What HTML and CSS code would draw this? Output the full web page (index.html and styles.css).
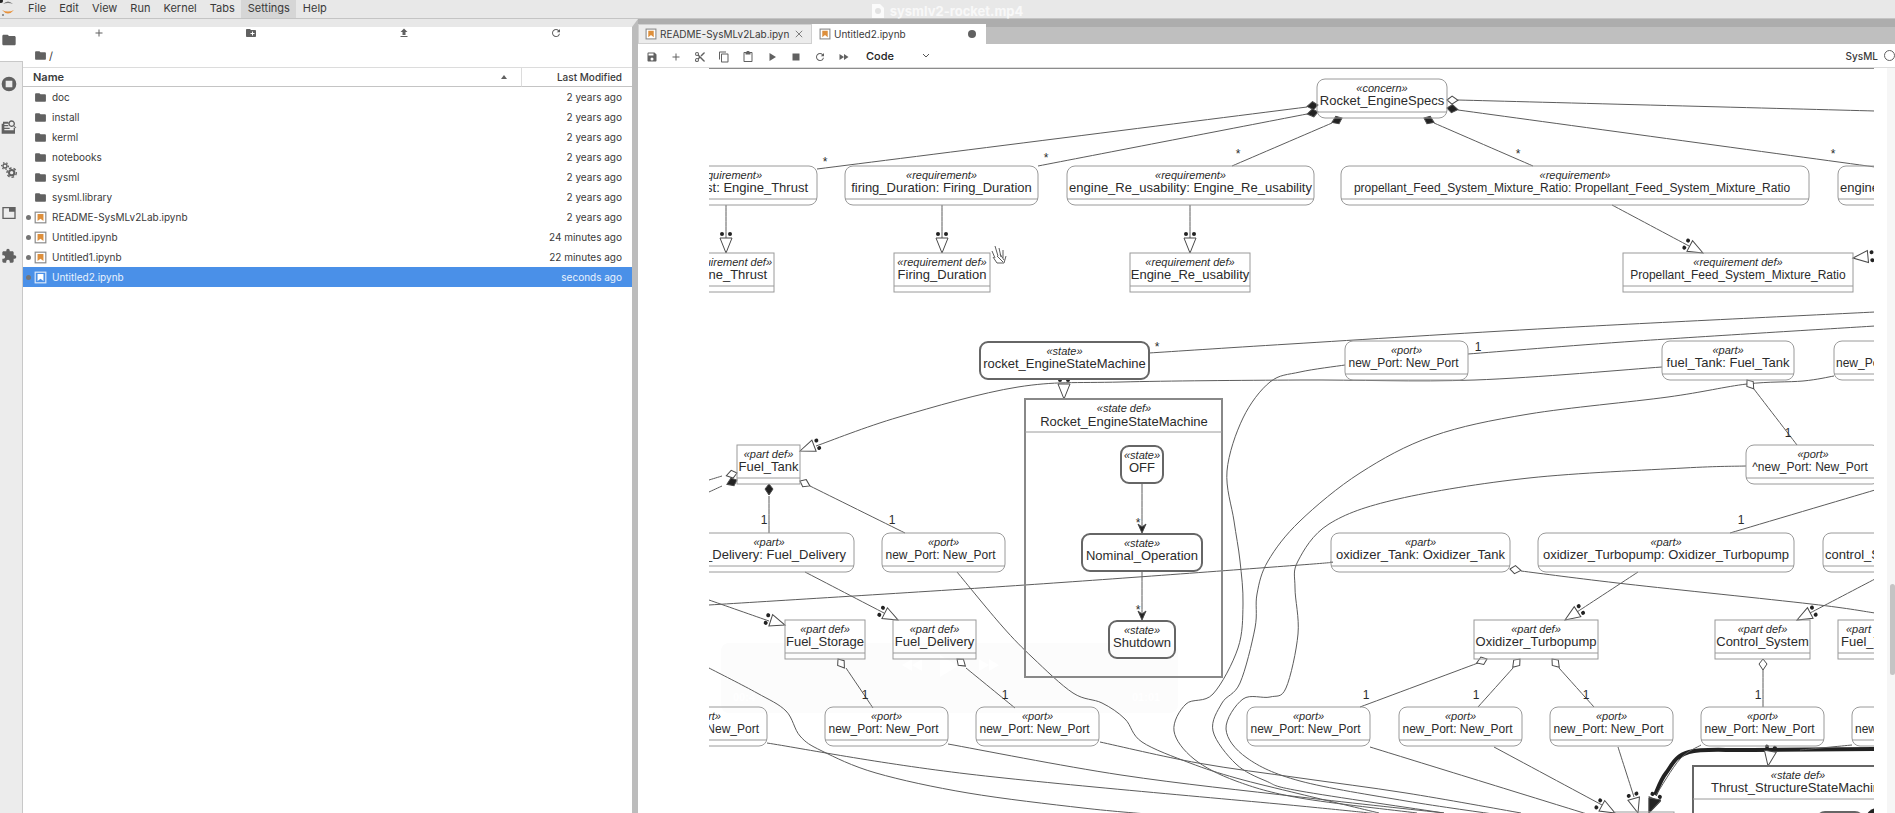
FILE: index.html
```html
<!DOCTYPE html>
<html lang="en">
<head>
    <meta charset="UTF-8">
    <meta name="viewport" content="width=device-width, initial-scale=1.0">
    <title>JupyterLab</title>
    <link rel="stylesheet" href="styles.css">
</head>
<body>
    <!-- shared icons -->
    <svg class="sprite" aria-hidden="true">
        <symbol id="i-folder" viewBox="0 0 24 24"><path d="M10 4H4c-1.100 0-2 .9-2 2v12c0 1.100.9 2 2 2h16c1.100 0 2-.9 2-2V8c0-1.100-.9-2-2-2h-8z"/></symbol>
        <symbol id="i-newfolder" viewBox="0 0 24 24"><path d="M20 6h-8l-2-2H4c-1.100 0-2 .9-2 2v12c0 1.100.9 2 2 2h16c1.100 0 2-.9 2-2V8c0-1.100-.9-2-2-2zm-1 8h-3v3h-2v-3h-3v-2h3V9h2v3h3z"/></symbol>
        <symbol id="i-add" viewBox="0 0 24 24"><path d="M19 13h-6v6h-2v-6H5v-2h6V5h2v6h6z"/></symbol>
        <symbol id="i-upload" viewBox="0 0 24 24"><path d="M9 16h6v-6h4l-7-7-7 7h4zm-4 2h14v2H5z"/></symbol>
        <symbol id="i-refresh" viewBox="0 0 18 18"><path d="M9 13.500c-2.490 0-4.500-2.010-4.500-4.500S6.510 4.500 9 4.500c1.240 0 2.360.52 3.170 1.330L10 8h5V3l-1.760 1.760C12.150 3.680 10.660 3 9 3 5.690 3 3.010 5.690 3.010 9S5.690 15 9 15c2.970 0 5.430-2.160 5.900-5h-1.520c-.46 2-2.240 3.500-4.380 3.500z"/></symbol>
        <symbol id="i-notebook" viewBox="0 0 22 22"><rect x="2" y="2" width="18" height="18" fill="#fff" stroke="#8a8a8a" stroke-width="2"/><path fill="#dd8f3c" d="M6 5h10v12l-5-4-5 4z"/></symbol>
        <symbol id="i-running" viewBox="0 0 24 24"><path d="M12 1a11 11 0 1 0 0 22a11 11 0 0 0 0-22zM7 7h10v10H7z" fill-rule="evenodd"/></symbol>
        <symbol id="i-search" viewBox="0 0 24 24"><path d="M3 4h8v3H5v2h6v2H5v2h8v2H5v2h14v-4h2v9H1V7h2zM16 2a5 5 0 0 1 4 8l3 3-1 1-3-3a5 5 0 1 1-3-9zm0 2a3 3 0 1 0 0 6a3 3 0 0 0 0-6z" fill-rule="evenodd"/></symbol>
        <symbol id="i-gears" viewBox="0 0 24 24"><g fill="none" stroke="#616161"><circle cx="6" cy="6" r="3" stroke-width="2"/><circle cx="6" cy="6" r="5" stroke-width="2" stroke-dasharray="2 3"/><circle cx="16" cy="16" r="4" stroke-width="3"/><circle cx="16" cy="16" r="7" stroke-width="2" stroke-dasharray="4 3"/></g></symbol>
        <symbol id="i-tabs" viewBox="0 0 24 24"><path d="M2 3h20v18H2zM4 5v14h16V10h-8V5z" fill-rule="evenodd"/></symbol>
        <symbol id="i-puzzle" viewBox="0 0 24 24"><path d="M20.500 11H19V7c0-1.100-.9-2-2-2h-4V3.500a2.500 2.500 0 0 0-5 0V5H4c-1.100 0-2 .9-2 2v3.800h1.500a2.700 2.700 0 0 1 0 5.400H2V20c0 1.100.9 2 2 2h3.800v-1.500a2.700 2.700 0 0 1 5.400 0V22H17c1.100 0 2-.9 2-2v-4h1.500a2.500 2.500 0 0 0 0-5z"/></symbol>
        <symbol id="i-save" viewBox="0 0 24 24"><path d="M17 3H5c-1.100 0-2 .9-2 2v14c0 1.100.9 2 2 2h14c1.100 0 2-.9 2-2V7zm-5 16a3 3 0 1 1 0-6 3 3 0 0 1 0 6zm3-10H5V5h10z"/></symbol>
        <symbol id="i-cut" viewBox="0 0 24 24"><path d="M9.640 7.640c.23-.5.360-1.050.360-1.640a4 4 0 1 0-4 4c.59 0 1.140-.13 1.640-.36L10 12l-2.360 2.360A4 4 0 1 0 10 18c0-.59-.13-1.140-.36-1.640L12 14l7 7h3v-1zM6 8a2 2 0 1 1 0-4 2 2 0 0 1 0 4zm0 12a2 2 0 1 1 0-4 2 2 0 0 1 0 4zM19 3l-6 6 2 2 7-7V3z"/></symbol>
        <symbol id="i-copy" viewBox="0 0 24 24"><path d="M16 1H4c-1.100 0-2 .9-2 2v14h2V3h12zm3 4H8c-1.100 0-2 .9-2 2v14c0 1.100.9 2 2 2h11c1.100 0 2-.9 2-2V7c0-1.100-.9-2-2-2zm0 16H8V7h11z"/></symbol>
        <symbol id="i-paste" viewBox="0 0 24 24"><path d="M19 2h-4a3 3 0 0 0-6 0H5c-1.100 0-2 .9-2 2v16c0 1.100.9 2 2 2h14c1.100 0 2-.9 2-2V4c0-1.100-.9-2-2-2zm0 18H5V4h2v3h10V4h2z"/></symbol>
        <symbol id="i-play" viewBox="0 0 24 24"><path d="M7 4v16l13-8z"/></symbol>
        <symbol id="i-stop" viewBox="0 0 24 24"><path d="M5 5h14v14H5z"/></symbol>
        <symbol id="i-ff" viewBox="0 0 24 24"><path d="M3 6v12l9-6zm9 0v12l9-6z"/></symbol>
        <symbol id="i-close" viewBox="0 0 10 10"><path d="M1 1l8 8M9 1l-8 8" fill="none" stroke="#616161"/></symbol>
    </svg>

    <header class="menubar">
        <svg class="logo" viewBox="0 0 16 18">
            <path d="M3 4q5-5 10 0-5-2-10 0z" fill="#777"/>
            <path d="M2 10q6 3 12 0-6 7-12 0z" fill="#e8913a"/>
            <circle cx="3" cy="15" r="1" fill="#777"/>
            <circle cx="1" cy="1" r="2" fill="#222"/>
        </svg>
        <nav class="menu">
            <button type="button">File</button>
            <button type="button">Edit</button>
            <button type="button">View</button>
            <button type="button">Run</button>
            <button type="button">Kernel</button>
            <button type="button">Tabs</button>
            <button type="button" class="open">Settings</button>
            <button type="button">Help</button>
        </nav>
        <div class="video-title">
            <svg viewBox="0 0 12 14"><path d="M0 0h8l4 4v10H0z" fill="#fbfbfb"/><circle cx="6" cy="7" r="3" fill="#e2e2e2"/></svg>
            sysmlv2-rocket.mp4
        </div>
    </header>

    <div class="workspace">
        <aside class="left">
            <div class="activity">
                <button type="button" class="active" aria-label="File Browser"><svg><use href="#i-folder"/></svg></button>
                <button type="button" aria-label="Running"><svg><use href="#i-running"/></svg></button>
                <button type="button" aria-label="Inspector"><svg><use href="#i-search"/></svg></button>
                <button type="button" aria-label="Properties"><svg><use href="#i-gears"/></svg></button>
                <button type="button" aria-label="Open Tabs"><svg><use href="#i-tabs"/></svg></button>
                <button type="button" aria-label="Extensions"><svg><use href="#i-puzzle"/></svg></button>
            </div>
            <div class="browser">
                <div class="browser-tools">
                    <button type="button" aria-label="New Launcher"><svg><use href="#i-add"/></svg></button>
                    <button type="button" aria-label="New Folder"><svg><use href="#i-newfolder"/></svg></button>
                    <button type="button" aria-label="Upload"><svg><use href="#i-upload"/></svg></button>
                    <button type="button" aria-label="Refresh"><svg><use href="#i-refresh"/></svg></button>
                </div>
                <div class="crumbs"><svg><use href="#i-folder"/></svg><a href="#">/</a></div>
                <table class="files">
                    <thead>
                        <tr><th>Name<span class="sort"></span></th><th>Last Modified</th></tr>
                    </thead>
                    <tbody>
                        <tr><td><svg><use href="#i-folder"/></svg><a href="#">doc</a></td><td>2 years ago</td></tr>
                        <tr><td><svg><use href="#i-folder"/></svg><a href="#">install</a></td><td>2 years ago</td></tr>
                        <tr><td><svg><use href="#i-folder"/></svg><a href="#">kerml</a></td><td>2 years ago</td></tr>
                        <tr><td><svg><use href="#i-folder"/></svg><a href="#">notebooks</a></td><td>2 years ago</td></tr>
                        <tr><td><svg><use href="#i-folder"/></svg><a href="#">sysml</a></td><td>2 years ago</td></tr>
                        <tr><td><svg><use href="#i-folder"/></svg><a href="#">sysml.library</a></td><td>2 years ago</td></tr>
                        <tr class="running"><td><svg><use href="#i-notebook"/></svg><a href="#">README-SysMLv2Lab.ipynb</a></td><td>2 years ago</td></tr>
                        <tr class="running"><td><svg><use href="#i-notebook"/></svg><a href="#">Untitled.ipynb</a></td><td>24 minutes ago</td></tr>
                        <tr class="running"><td><svg><use href="#i-notebook"/></svg><a href="#">Untitled1.ipynb</a></td><td>22 minutes ago</td></tr>
                        <tr class="running selected"><td><svg viewBox="0 0 22 22"><rect x="2" y="2" width="18" height="18" fill="none" stroke="#dce9fa" stroke-width="2"/><path fill="#fff" d="M6 5h10v12l-5-4-5 4z"/></svg><a href="#">Untitled2.ipynb</a></td><td>seconds ago</td></tr>
                    </tbody>
                </table>
            </div>
        </aside>

        <main class="dock">
            <div class="tabs">
                <div class="tab"><svg><use href="#i-notebook"/></svg><span>README-SysMLv2Lab.ipyn</span><button type="button" aria-label="Close"><svg><use href="#i-close"/></svg></button></div>
                <div class="tab current"><svg><use href="#i-notebook"/></svg><span>Untitled2.ipynb</span><i class="dirty"></i></div>
            </div>
            <div class="toolbar">
                <button type="button" aria-label="Save"><svg><use href="#i-save"/></svg></button>
                <button type="button" aria-label="Insert"><svg><use href="#i-add"/></svg></button>
                <button type="button" aria-label="Cut"><svg><use href="#i-cut"/></svg></button>
                <button type="button" aria-label="Copy"><svg><use href="#i-copy"/></svg></button>
                <button type="button" aria-label="Paste"><svg><use href="#i-paste"/></svg></button>
                <button type="button" aria-label="Run"><svg><use href="#i-play"/></svg></button>
                <button type="button" aria-label="Stop"><svg><use href="#i-stop"/></svg></button>
                <button type="button" aria-label="Restart"><svg><use href="#i-refresh"/></svg></button>
                <button type="button" aria-label="Run all"><svg><use href="#i-ff"/></svg></button>
                <div class="cell-type">
                    <select aria-label="Cell type"><option>Code</option></select>
                    <svg viewBox="0 0 8 8"><path d="M1 2l3 3 3-3" fill="none" stroke="#555"/></svg>
                </div>
                <button type="button" class="kernel">SysML</button>
                <span class="kernel-status"></span>
            </div>
            <div class="notebook">
                <svg class="diagram" id="diagram"></svg>
                <div class="scroll"><div class="thumb"></div></div>
            </div>
        </main>
    </div>
    <script src="script.js"></script>
</body>
</html>
```
FILE: styles.css
```css
* {
    box-sizing: border-box;
}
body {
    margin: 0;
    height: 100vh;
    display: flex;
    flex-direction: column;
    overflow: hidden;
    font-family: Inter, "Liberation Sans", sans-serif;
    font-size: 11px;
    color: #3a3a3a;
    background: #fff;
}
button {
    border: none;
    background: none;
    padding: 0;
    font: inherit;
    color: inherit;
}
a {
    color: inherit;
    text-decoration: none;
}
svg {
    fill: #616161;
}
.sprite {
    display: none;
}

/* menu bar */
.menubar {
    position: relative;
    display: flex;
    flex: none;
    height: 19px;
    background: #e8e8e8;
    border-bottom: 1px solid #c4c4c4;
}
.logo {
    width: 16px;
    height: 18px;
    margin-right: 5px;
}
.menu {
    display: flex;
}
.menu button {
    padding: 0 6px 2px 7px;
}
.menu .open {
    background: #d6d6d6;
}
.video-title {
    position: absolute;
    inset: 4px 0 0 0;
    display: flex;
    justify-content: center;
    align-items: center;
    gap: 6px;
    font-size: 13px;
    font-weight: 700;
    color: #f8f8f8;
    pointer-events: none;
}
.video-title svg {
    width: 12px;
    height: 14px;
}

.workspace {
    display: flex;
    flex: 1;
    min-height: 0;
}

/* left side */
.left {
    display: flex;
    flex: none;
    width: 638px;
    border-top: 8px solid #e8e8e8;
    border-right: 6px solid #bcbcbc;
}
.activity {
    width: 23px;
    background: #ececec;
    border-right: 1px solid #c8c8c8;
}
.activity button {
    display: flex;
    align-items: center;
    width: 22px;
    height: 43px;
    padding-left: 1px;
}
.activity .active {
    width: 23px;
    height: 35px;
    padding-bottom: 8px;
    background: #fff;
    border-bottom: 1px solid #c8c8c8;
}
.activity svg {
    width: 16px;
    height: 16px;
}
.browser {
    flex: 1;
    background: #fff;
}
.browser-tools {
    display: flex;
    height: 13px;
}
.browser-tools button {
    flex: 1;
}
.browser-tools svg {
    width: 12px;
    height: 12px;
}
.crumbs {
    display: flex;
    align-items: center;
    gap: 2px;
    height: 27px;
    padding: 4px 0 0 11px;
}
.crumbs svg,
.files svg {
    width: 13px;
    height: 13px;
}
.files {
    width: 100%;
    table-layout: fixed;
    border-collapse: separate;
    border-spacing: 0;
    font-size: 10px;
}
.files th {
    height: 20px;
    padding: 0 10px;
    border-top: 1px solid #dcdcdc;
    border-bottom: 1px solid #c4c4c4;
    text-align: left;
    font-size: 11px;
    font-weight: 600;
}
.files th + th {
    width: 111px;
    border-left: 1px solid #dcdcdc;
    text-align: right;
    font-size: 10px;
    font-weight: 500;
}
.sort {
    float: right;
    margin: 5px 4px 0 0;
    border: 3px solid transparent;
    border-top: 0;
    border-bottom: 4px solid #616161;
}
.files td {
    height: 20px;
    padding: 0 10px;
    white-space: nowrap;
}
.files td:first-child {
    padding-left: 11px;
}
.files td + td {
    text-align: right;
}
.files svg {
    margin-right: 5px;
    vertical-align: middle;
}
.files a {
    vertical-align: middle;
}
.running td:first-child::before {
    content: "";
    display: inline-block;
    width: 5px;
    height: 5px;
    margin: 0 3px 0 -8px;
    border-radius: 50%;
    background: #757575;
    vertical-align: middle;
}
.selected {
    background: #4a90e8;
    color: #e9f2fd;
}

/* notebook area */
.dock {
    display: flex;
    flex-direction: column;
    flex: 1;
    min-width: 0;
}
.tabs {
    display: flex;
    height: 25px;
    padding-top: 5px;
    background: linear-gradient(#adadad 8px, #bfbfbf 8px);
    font-size: 10px;
}
.tab {
    display: flex;
    align-items: center;
    width: 174px;
    padding: 0 6px;
    gap: 3px;
    background: #ececec;
    border: 1px solid #d0d0d0;
}
.tab span {
    flex: 1;
    white-space: nowrap;
}
.tab svg {
    flex: none;
    width: 12px;
    height: 12px;
}
.tab button {
    display: flex;
    margin-right: 2px;
}
.tab button svg {
    width: 8px;
    height: 8px;
}
.tab.current {
    background: #fff;
    border-color: #fff;
}
.dirty {
    width: 8px;
    height: 8px;
    margin-right: 3px;
    border-radius: 50%;
    background: #616161;
}
.toolbar {
    display: flex;
    align-items: center;
    height: 23px;
    padding-left: 2px;
}
.toolbar button {
    width: 24px;
    height: 20px;
}
.toolbar button svg {
    width: 12px;
    height: 12px;
    vertical-align: middle;
}
.cell-type {
    display: flex;
    align-items: center;
    width: 80px;
    padding-left: 10px;
}
.cell-type select {
    width: 56px;
    border: none;
    background: none;
    appearance: none;
    font: inherit;
    font-weight: 500;
    color: #222;
}
.cell-type svg {
    width: 8px;
    height: 8px;
}
.toolbar .kernel {
    width: auto;
    margin-left: auto;
    font-size: 10px;
    font-weight: 500;
}
.kernel-status {
    width: 11px;
    height: 11px;
    margin-left: 6px;
    border: 1px solid #616161;
    border-radius: 50%;
}
.notebook {
    display: flex;
    flex: 1;
    min-height: 0;
    padding-left: 71px;
    border-top: 1px solid #dcdcdc;
}
.diagram {
    flex: 1;
    min-width: 0;
    height: 100%;
    border-top: 1px solid #8c8c8c;
    font-family: "Liberation Sans", Arial, sans-serif;
}
.scroll {
    width: 8px;
    margin-left: 13px;
    padding-top: 516px;
    background: #f6f6f6;
}
.thumb {
    width: 5px;
    height: 91px;
    margin-left: 3px;
    border-radius: 3px;
    background: #c4c4c4;
}

/* diagram */
.box {
    fill: none;
    stroke: #9a9a9a;
}
.box.strong {
    stroke: #666;
    stroke-width: 2;
}
.box.frame {
    stroke: #888;
    stroke-width: 2;
}
.edge {
    fill: none;
    stroke: #5c5c5c;
}
.edge.heavy {
    stroke: #222;
    stroke-width: 4;
}
.head {
    fill: #fff;
    stroke: #4a4a4a;
}
.head.solid,
.dot {
    fill: #222;
}
.kind,
.name,
.port,
.mult {
    fill: #2b2b2b;
    font-size: 13px;
}
.kind {
    font-size: 11px;
    font-style: italic;
}
.port,
.mult {
    font-size: 12px;
}
.player {
    fill: #fcfcfc;
}
.player-icon {
    fill: #fff;
    font-size: 11px;
    font-weight: 700;
}
```
FILE: script.js
```js
const svg = document.getElementById('diagram');
const NS = 'http://www.w3.org/2000/svg';
const root = add('g', { transform: 'translate(-709 -68)' }, svg);

function add(tag, attrs, parent) {
    const el = document.createElementNS(NS, tag);
    for (const key in attrs) el.setAttribute(key, attrs[key]);
    (parent || root).appendChild(el);
    return el;
}

function text(x, y, value, cls, anchor) {
    add('text', { x: x, y: y, class: cls, 'text-anchor': anchor || 'middle' }).textContent = value;
}

// smooth path through a list of points
function edge(pts, cls) {
    let d = 'M' + pts[0];
    for (let i = 0; i < pts.length - 1; i++) {
        const a = pts[i - 1] || pts[i], b = pts[i], c = pts[i + 1], e = pts[i + 2] || c;
        d += ` C${b[0] + (c[0] - a[0]) / 6} ${b[1] + (c[1] - a[1]) / 6}` +
             ` ${c[0] - (e[0] - b[0]) / 6} ${c[1] - (e[1] - b[1]) / 6} ${c[0]} ${c[1]}`;
    }
    add('path', { d: d, class: 'edge ' + (cls || '') });
}

// marker drawn in its own axis: tip at 0,0, line leaves to the right
function marker(tip, from) {
    const angle = Math.atan2(from[1] - tip[1], from[0] - tip[0]) * 180 / Math.PI;
    return add('g', { transform: `translate(${tip[0]} ${tip[1]}) rotate(${angle})` });
}
function diamond(tip, from, solid) {
    add('path', { d: 'M0 0L5 -4L11 0L5 4Z', class: solid ? 'head solid' : 'head' }, marker(tip, from));
}
function typed(tip, from) {
    const g = marker(tip, from);
    add('path', { d: 'M0 0L15 -6V6Z', class: 'head' }, g);
    add('circle', { cx: 19, cy: -4, r: 2, class: 'dot' }, g);
    add('circle', { cx: 19, cy: 4, r: 2, class: 'dot' }, g);
}

// box with header text and an empty compartment line
function box(x, y, w, kind, name, opt) {
    opt = opt || {};
    add('rect', { x: x, y: y, width: w, height: 39, rx: opt.def ? 0 : 8, class: 'box' });
    add('path', { d: `M${x} ${y + 33}h${w}`, class: 'box' });
    const cx = x + w / 2;
    text(opt.kx || cx, y + 13, '«' + kind + '»', 'kind', opt.ka || opt.anchor);
    text(opt.nx || cx - (opt.cls ? 3 : 0), y + 26, name, opt.cls || 'name', opt.anchor);
}
function state(x, y, w, h, name) {
    add('rect', { x: x, y: y, width: w, height: h, rx: 8, class: 'box strong' });
    text(x + w / 2, y + 13, '«state»', 'kind');
    text(x + w / 2, y + 26, name, 'name');
}
function port(x, y) {
    box(x, y, 123, 'port', 'new_Port: New_Port', { cls: 'port' });
}

// faint player controls
add('rect', { x: 721, y: 642, width: 457, height: 70, rx: 8, class: 'player' });
add('path', { d: 'M912 658v12l-10-6zM922 658v12l-10-6zM940 654v22l18-11zM979 658v12l10-6zM989 658v12l10-6z', class: 'player-icon' });
text(733, 700, '00:4', 'player-icon', 'start');
text(1132, 700, '01:01', 'player-icon', 'start');

// edges
edge([[1307, 106], [817, 168]]);
edge([[1307, 113], [1038, 165]]);
edge([[1332, 122], [1232, 165]]);
edge([[1434, 122], [1533, 165]]);
edge([[1458, 109], [1875, 166]]);
edge([[1458, 99], [1875, 110]]);
for (const x of [726, 942, 1190]) {
    edge([[x, 204], [x, 237]]);
    typed([x, 252], [x, 204]);
}
edge([[1612, 204], [1689, 245]]);
typed([1703, 252], [1612, 204]);
typed([1853, 257], [1874, 255]);
diamond([1318, 104], [1037, 140], true);
diamond([1318, 111], [1037, 165], true);
diamond([1342, 117], [1232, 165], true);
diamond([1424, 117], [1533, 165], true);
diamond([1447, 107], [1875, 166], true);
diamond([1447, 99], [1875, 110]);

edge([[1149, 352], [1290, 343], [1556, 327], [1875, 311]]);
edge([[1468, 353], [1637, 340], [1875, 325]]);
edge([[816, 445], [899, 416], [1018, 386], [1121, 381], [1300, 379], [1475, 379], [1662, 366]]);
typed([800, 450], [829, 439]);
typed([1064, 398], [1064, 378]);
edge([[1345, 364], [1300, 371], [1270, 381], [1243, 417], [1227, 470], [1234, 520], [1240, 560], [1243, 603], [1238, 647], [1213, 693], [1186, 703], [1174, 730], [1194, 758], [1236, 780], [1300, 797], [1417, 812]]);
edge([[1834, 375], [1803, 380], [1747, 383], [1668, 396], [1529, 413], [1433, 435], [1360, 472], [1300, 520], [1268, 560], [1257, 593], [1255, 627], [1240, 682], [1222, 702], [1213, 730], [1236, 763], [1266, 780], [1300, 790], [1444, 812]]);
edge([[1746, 465], [1684, 467], [1529, 477], [1398, 498], [1329, 523], [1298, 560], [1295, 587], [1298, 633], [1286, 687], [1270, 696], [1243, 698], [1226, 728], [1247, 757], [1300, 780], [1406, 800], [1500, 814]]);
edge([[1747, 379], [1797, 444]]);
diamond([1747, 379], [1797, 444]);
edge([[722, 475], [709, 479]]);
edge([[722, 485], [709, 491]]);
diamond([737, 472], [709, 479]);
diamond([737, 479], [709, 491], true);
edge([[769, 495], [769, 532]]);
diamond([769, 483], [769, 532], true);
edge([[810, 485], [905, 532]]);
diamond([800, 480], [905, 532]);
edge([[1875, 489], [1730, 532]]);

edge([[709, 604], [1025, 584], [1300, 564], [1331, 561]]);
edge([[1521, 570], [1626, 583], [1811, 603], [1875, 612]]);
diamond([1510, 568], [1626, 583]);
edge([[709, 599], [769, 620]]);
typed([785, 624], [709, 599]);
edge([[805, 571], [884, 612]]);
typed([898, 619], [805, 571]);
edge([[1638, 571], [1577, 611]]);
typed([1565, 619], [1638, 571]);
edge([[1875, 578], [1810, 612]]);
typed([1797, 619], [1875, 578]);
edge([[957, 571], [1002, 625], [1033, 657], [1073, 692], [1102, 702], [1125, 718], [1142, 741], [1190, 762], [1236, 777], [1300, 793], [1379, 812]]);
edge([[709, 667], [757, 692], [786, 710], [800, 735], [822, 750], [876, 772], [968, 792], [1083, 807], [1159, 814]]);
edge([[846, 667], [873, 707]]);
diamond([838, 658], [873, 707]);
edge([[966, 667], [1015, 707]]);
diamond([957, 658], [1015, 707]);
edge([[1478, 662], [1360, 706]]);
diamond([1487, 658], [1360, 706]);
edge([[1513, 667], [1478, 706]]);
diamond([1520, 658], [1478, 706]);
edge([[1559, 667], [1594, 706]]);
diamond([1552, 658], [1594, 706]);
edge([[1763, 669], [1763, 706]]);
diamond([1763, 658], [1763, 706]);
edge([[767, 742], [968, 773], [1300, 805], [1379, 813]]);
edge([[948, 743], [1121, 774], [1300, 796], [1444, 812]]);
edge([[1100, 741], [1198, 762], [1300, 777], [1406, 792], [1521, 812]]);
edge([[1370, 746], [1587, 813]]);
edge([[1494, 746], [1602, 804]]);
typed([1615, 812], [1494, 746]);
edge([[1618, 746], [1634, 796]]);
typed([1638, 812], [1627, 775]);
edge([[1655, 794], [1666, 772], [1689, 751], [1753, 749], [1875, 748]], 'heavy');
edge([[1701, 744], [1680, 758], [1656, 794]]);
edge([[1852, 744], [1800, 749]]);
typed([1649, 812], [1660, 785]);
add('path', { d: 'M1649 812V797L1661 799Z', class: 'head solid' });
typed([1768, 765], [1772, 740]);

// multiplicities
for (const p of [[825, 158], [1046, 154], [1238, 150], [1518, 150], [1833, 150], [1157, 343], [1138, 519], [1138, 606]]) {
    text(p[0], p[1] + 7, '*', 'mult');
}
for (const p of [[1478, 350], [1788, 436], [764, 523], [892, 523], [1741, 523], [865, 698], [1005, 698], [1366, 698], [1476, 698], [1586, 698], [1758, 698]]) {
    text(p[0], p[1], '1', 'mult');
}

// requirements
box(1317, 78, 130, 'concern', 'Rocket_EngineSpecs');
box(600, 165, 217, 'requirement', 'engine_Thrust: Engine_Thrust', { anchor: 'end', kx: 762, nx: 808 });
box(845, 165, 193, 'requirement', 'firing_Duration: Firing_Duration');
box(1067, 165, 247, 'requirement', 'engine_Re_usability: Engine_Re_usability');
box(1341, 165, 468, 'requirement', 'propellant_Feed_System_Mixture_Ratio: Propellant_Feed_System_Mixture_Ratio', { cls: 'port' });
box(1838, 165, 200, 'requirement', 'engine_Mass: Engine_Mass', { anchor: 'start', kx: 1910, nx: 1840 });
box(670, 252, 104, 'requirement def', 'Engine_Thrust', { def: true, anchor: 'end', kx: 772, nx: 767 });
box(894, 252, 96, 'requirement def', 'Firing_Duration', { def: true });
box(1130, 252, 120, 'requirement def', 'Engine_Re_usability', { def: true });
box(1623, 252, 230, 'requirement def', 'Propellant_Feed_System_Mixture_Ratio', { def: true, cls: 'port', nx: 1738 });

// states
state(980, 341, 169, 37, 'rocket_EngineStateMachine');
add('rect', { x: 1025, y: 398, width: 197, height: 278, class: 'box frame' });
add('path', { d: 'M1025 431h197', class: 'box' });
text(1124, 411, '«state def»', 'kind');
text(1124, 425, 'Rocket_EngineStateMachine', 'name');
state(1121, 445, 42, 37, 'OFF');
state(1082, 533, 120, 37, 'Nominal_Operation');
state(1109, 620, 66, 37, 'Shutdown');
edge([[1142, 483], [1142, 530]]);
edge([[1142, 571], [1142, 618]]);
add('path', { d: 'M1142 532l-4 -9l4 3l4 -3zM1142 619l-4 -9l4 3l4 -3z', class: 'head solid' });

// parts and ports
port(1345, 340);
box(1662, 340, 132, 'part', 'fuel_Tank: Fuel_Tank');
box(1834, 340, 123, 'port', 'new_Port: New_Port', { cls: 'port', anchor: 'start', kx: 1890, nx: 1836 });
box(737, 444, 63, 'part def', 'Fuel_Tank', { def: true });
box(1746, 444, 134, 'port', '^new_Port: New_Port', { cls: 'port' });
box(640, 532, 214, 'part', 'fuel_Delivery: Fuel_Delivery', { anchor: 'end', ka: 'middle', kx: 769, nx: 846 });
port(882, 532);
box(1331, 532, 179, 'part', 'oxidizer_Tank: Oxidizer_Tank');
box(1538, 532, 256, 'part', 'oxidizer_Turbopump: Oxidizer_Turbopump');
box(1823, 532, 210, 'part', 'control_System: Control_System', { anchor: 'start', kx: 1910, nx: 1825 });
box(785, 619, 80, 'part def', 'Fuel_Storage', { def: true });
box(893, 619, 83, 'part def', 'Fuel_Delivery', { def: true });
box(1474, 619, 124, 'part def', 'Oxidizer_Turbopump', { def: true });
box(1715, 619, 95, 'part def', 'Control_System', { def: true });
box(1838, 619, 110, 'part def', 'Fuel_Turbopump', { def: true, anchor: 'start', kx: 1846, nx: 1841 });
box(644, 706, 123, 'port', 'new_Port: New_Port', { cls: 'port', anchor: 'end', kx: 721, nx: 759 });
for (const x of [825, 976, 1247, 1399, 1550, 1701]) port(x, 706);
box(1852, 706, 123, 'port', 'new_Port: New_Port', { cls: 'port', anchor: 'start', kx: 1910, nx: 1855 });

add('rect', { x: 1693, y: 765, width: 260, height: 80, class: 'box strong' });
add('path', { d: 'M1693 798h260', class: 'box' });
text(1798, 778, '«state def»', 'kind');
text(1711, 791, 'Thrust_StructureStateMachine', 'name', 'start');
add('rect', { x: 1615, y: 811, width: 59, height: 20, class: 'box' });
add('rect', { x: 1817, y: 811, width: 46, height: 20, rx: 8, class: 'box strong' });
add('circle', { cx: 1877, cy: 818, r: 11, class: 'dot' });

// hand cursor
add('path', { d: 'M992 250l3 7M995 245l3 10M999 247l2 9M1003 249v8M993 256l4 6h7l2 -7M997 255l6 6M1000 253l4 6', class: 'edge' });
```
